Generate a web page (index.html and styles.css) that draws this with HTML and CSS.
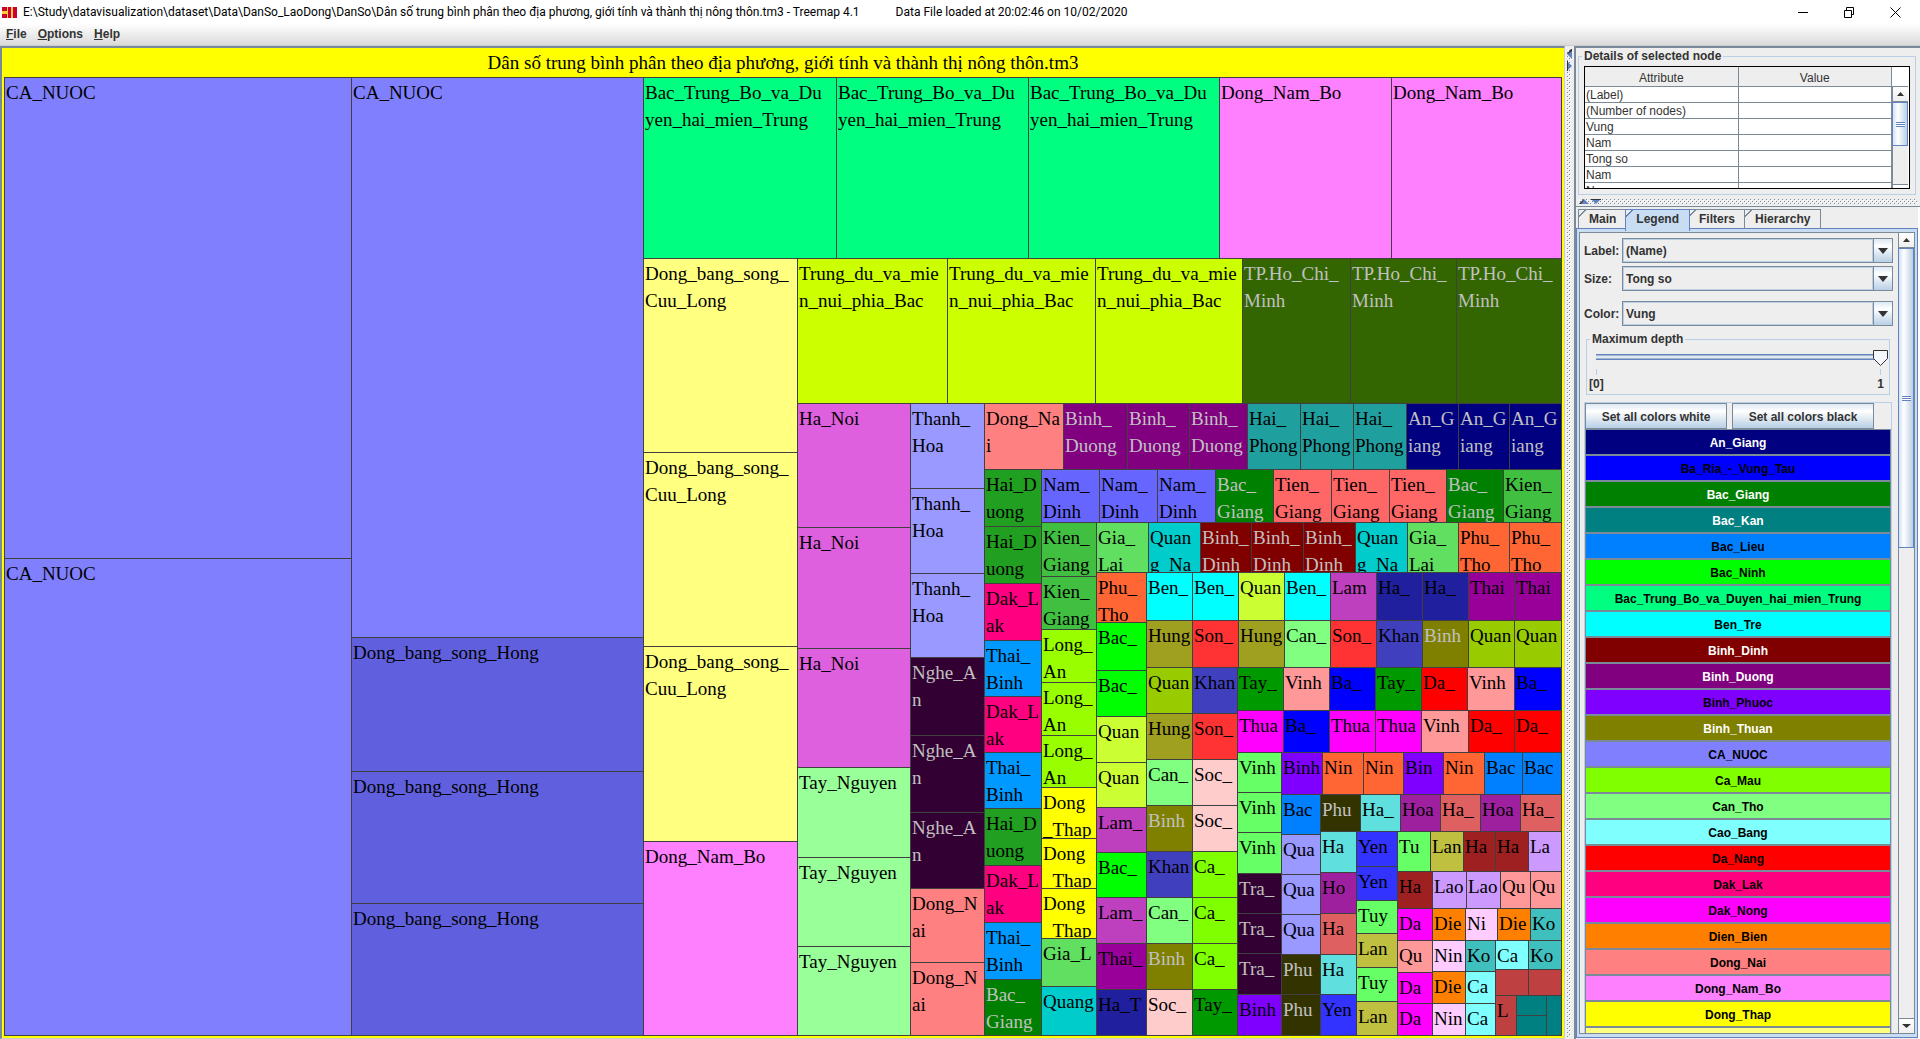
FILE: index.html
```html
<!DOCTYPE html>
<html lang="vi">
<head>
<meta charset="utf-8">
<title>Treemap 4.1</title>
<link rel="stylesheet" href="styles.css">
</head>
<body>
<header class="titlebar">
  <svg class="app-icon" width="15" height="11" viewBox="0 0 15 11" aria-hidden="true"><path fill="#ffcc33" d="M0 0h15v11H0z"/><path fill="#cc0033" d="M0 0h5v4H0zM0 7h5v4H0zM6 0h3v11H6zM11 0h4v11h-4z"/></svg>
  <span>E:\Study\datavisualization\dataset\Data\DanSo_LaoDong\DanSo\Dân số trung bình phân theo địa phương, giới tính và thành thị nông thôn.tm3 - Treemap 4.1</span>
  <span class="loaded">Data File loaded at 20:02:46 on 10/02/2020</span>
  <div class="window-buttons">
    <button aria-label="Minimize"><svg width="11" height="11"><path stroke="#000" d="M0 5.5h10"/></svg></button>
    <button aria-label="Restore"><svg width="11" height="11"><path fill="none" stroke="#000" d="M.5 3.5h7v7h-7zM2.500 3.500v-3h7v7h-2"/></svg></button>
    <button aria-label="Close"><svg width="11" height="11"><path stroke="#000" d="M.5.5l10 10M10.500.5l-10 10"/></svg></button>
  </div>
</header>
<nav class="menubar">
  <button><u>F</u>ile</button>
  <button><u>O</u>ptions</button>
  <button><u>H</u>elp</button>
</nav>
<main class="workspace">
  <section class="map-panel">
    <h1 class="map-title">Dân số trung bình phân theo địa phương, giới tính và thành thị nông thôn.tm3</h1>
    <div class="treemap" id="treemap"></div>
  </section>
  <div class="divider-v dots">
    <svg width="5" height="10"><path fill="#6382bf" d="M5 0v10L0 5z"/><path fill="#333" d="M4 0h1v2L1 5 0 5z"/></svg>
    <svg width="5" height="10"><path fill="#6382bf" d="M0 0l5 5-5 5z"/><path fill="#333" d="M0 0h1v10H0z"/></svg>
  </div>
  <aside class="sidebar">
    <fieldset class="group details">
      <legend>Details of selected node</legend>
      <div class="details-box">
        <table>
          <thead><tr><th>Attribute</th><th>Value</th></tr></thead>
          <tbody>
            <tr><td>(Label)</td><td></td></tr>
            <tr><td>(Number of nodes)</td><td></td></tr>
            <tr><td>Vung</td><td></td></tr>
            <tr><td>Nam</td><td></td></tr>
            <tr><td>Tong so</td><td></td></tr>
            <tr><td>Nam</td><td></td></tr>
            <tr><td>Nu</td><td></td></tr>
          </tbody>
        </table>
        <div class="scrollbar details-scroll">
          <button aria-label="Scroll up"><svg width="7" height="4"><path fill="#333" d="M0 4h7L3.500 0z"/></svg></button>
          <div class="track"><div class="thumb details-thumb"></div></div>
          <button aria-label="Scroll down"><svg width="9" height="4"><path fill="#333" d="M0 0h9L4.500 4z"/></svg></button>
        </div>
      </div>
    </fieldset>
    <div class="divider-h dots">
      <svg width="10" height="5"><path fill="#6382bf" d="M0 5h10L5 0z"/><path fill="#333" d="M0 5L5 0v1L2 5z"/></svg>
      <svg width="10" height="5"><path fill="#6382bf" d="M0 0h10L5 5z"/><path fill="#333" d="M0 0h10v1H0z"/></svg>
    </div>
    <div class="tabs-pane">
      <div class="tabs" role="tablist">
        <button role="tab" class="tab">Main</button>
        <button role="tab" class="tab selected" aria-selected="true">Legend</button>
        <button role="tab" class="tab">Filters</button>
        <button role="tab" class="tab">Hierarchy</button>
      </div>
      <div class="tab-panel" role="tabpanel">
        <div class="tab-view">
          <div class="legend-form">
            <div class="field"><label for="f-label">Label:</label><div class="combo"><select id="f-label"><option>(Name)</option></select><span class="arrow"><svg width="10" height="6"><path fill="#333" d="M0 0h10L5 6z"/></svg></span></div></div>
            <div class="field"><label for="f-size">Size:</label><div class="combo"><select id="f-size"><option>Tong so</option></select><span class="arrow"><svg width="10" height="6"><path fill="#333" d="M0 0h10L5 6z"/></svg></span></div></div>
            <div class="field field-color"><label for="f-color">Color:</label><div class="combo"><select id="f-color"><option>Vung</option></select><span class="arrow"><svg width="10" height="6"><path fill="#333" d="M0 0h10L5 6z"/></svg></span></div></div>
            <fieldset class="group depth">
              <legend>Maximum depth</legend>
              <input type="range" min="0" max="1" value="1" aria-label="Maximum depth">
              <div class="ticks"><span></span><span></span></div>
              <div class="tick-labels"><span>[0]</span><span>1</span></div>
            </fieldset>
            <div class="colors">
              <div class="color-actions">
                <button class="metal">Set all colors white</button>
                <button class="metal">Set all colors black</button>
              </div>
              <div class="color-list" id="colors"></div>
            </div>
          </div>
          <div class="scrollbar">
            <button aria-label="Scroll up"><svg width="7" height="4"><path fill="#333" d="M0 4h7L3.500 0z"/></svg></button>
            <div class="track"><div class="thumb form-thumb"></div></div>
            <button aria-label="Scroll down"><svg width="9" height="4"><path fill="#333" d="M0 0h9L4.500 4z"/></svg></button>
          </div>
        </div>
      </div>
    </div>
  </aside>
</main>
<script src="treemap.js"></script>
</body>
</html>
```

FILE: styles.css
```css
* { box-sizing: border-box; }
body {
  margin: 0;
  height: 100vh;
  display: flex;
  flex-direction: column;
  overflow: hidden;
  background: #eee;
  color: #333;
  font: bold 12px/14px "Liberation Sans", Arial, sans-serif;
}
button, select, input { font: inherit; color: inherit; margin: 0; }
button { border: 0; padding: 0; background: none; display: flex; align-items: center; justify-content: center; }
svg { display: block; flex: none; }

.titlebar {
  display: flex;
  align-items: center;
  flex: none;
  height: 24px;
  padding-left: 2px;
  background: #fff;
  color: #000;
  font: 12px/16px Roboto, "Noto Sans", sans-serif;
  white-space: pre;
}
.app-icon { margin-right: 6px; }
.loaded { margin-left: 36px; }
.window-buttons { margin-left: auto; padding-right: 2px; display: flex; }
.window-buttons button { width: 46px; height: 20px; }

.menubar {
  display: flex;
  gap: 11px;
  flex: none;
  height: 22px;
  padding: 3px 6px 0;
  background: linear-gradient(#fff, #dadada);
  border-bottom: 1px solid #ccc;
}
.menubar button { display: block; height: 14px; }

.workspace { flex: 1; min-height: 0; display: flex; }
.map-panel {
  flex: 1;
  min-width: 0;
  display: flex;
  flex-direction: column;
  background: #ff0;
  border: solid #7a8a99;
  border-width: 2px 1px 1px 2px;
  border-right-color: #ccc;
  border-bottom-color: #ccc;
  padding: 0 2px 2px;
}
.map-title {
  margin: 0;
  height: 29px;
  flex: none;
  text-align: center;
  font: 19px/29px "Liberation Serif", "Times New Roman", serif;
  color: #000;
}
.treemap {
  flex: 1;
  min-height: 0;
  display: flex;
  border: solid #404040;
  border-width: 0 1px 1px 0;
  font: 19px/27px "Liberation Serif", "Times New Roman", serif;
  color: #000;
}
.row, .col, .cell { flex: 1 1 0; min-width: 0; min-height: 0; }
.row { display: flex; }
.col { display: flex; flex-direction: column; }
.cell {
  overflow: hidden;
  white-space: pre;
  box-shadow: inset 1px 1px #404040;
}
.cell span { display: block; margin: 2px 0 0 2px; }
.cell.dark { color: #c0c0c0; }

.dots {
  background: #eee url("data:image/svg+xml,%3Csvg xmlns='http://www.w3.org/2000/svg' width='4' height='4'%3E%3Cpath fill='%237a8a99' d='M0 0h1v1H0zM2 2h1v1H2z'/%3E%3Cpath fill='%23fff' d='M1 1h1v1H1zM3 3h1v1H3z'/%3E%3C/svg%3E");
  background-clip: content-box;
}
.divider-v {
  width: 9px;
  flex: none;
  padding: 3px 3px 2px 2px;
  background-color: #eee;
  display: flex;
  flex-direction: column;
  align-items: center;
  gap: 2px;
}
.divider-h { height: 9px; padding: 2px 2px 2px 3px; display: flex; gap: 2px; flex: none; }

.sidebar {
  width: 346px;
  flex: none;
  display: flex;
  flex-direction: column;
  border: solid #7a8a99;
  border-width: 2px 0 0 2px;
  background: #eee;
}
.group { border: 1px solid #b8cfe5; min-width: 0; }
.group legend { padding: 0 2px; }
.details { margin: 1px 4px 2px 2px; padding: 3px 5px 5px; flex: none; }
.details legend { margin-left: -2px; }
.details-box {
  display: grid;
  grid-template-columns: 1fr 17px;
  height: 123px;
  overflow: hidden;
  border: 1px solid #000;
  background: #fff;
}
.details table { border-collapse: separate; border-spacing: 0; table-layout: fixed; width: 100%; font-weight: normal; align-self: start; }
.details th, .details td { border: solid #7a8a99; border-width: 0 1px 1px 0; padding: 1px 1px 0; height: 16px; line-height: 14px; }
.details th { height: 20px; padding-top: 2px; font-weight: normal; background: #eee; }
.details-scroll { border-top: 1px solid #7a8a99; margin-top: 19px; }

.scrollbar { width: 16px; display: flex; flex-direction: column; min-height: 0; background: #eee; border-left: 1px solid #7a8a99; }
.scrollbar button { height: 15px; flex: none; border: 1px solid #7a8a99; border-width: 0 0 1px; background: linear-gradient(#fff, #eee); }
.scrollbar button:last-child { border-width: 1px 0 0; }
.track { flex: 1; min-height: 0; }
.thumb {
  margin-left: -1px;
  border: 1px solid #6382bf;
  background: linear-gradient(90deg, #d3e2f1, #fff 35%, #b8cfe5);
  display: flex;
  align-items: center;
  justify-content: center;
}
.thumb::before { content: ""; width: 9px; height: 5px; background: repeating-linear-gradient(#6382bf 0 1px, #fff 1px 2px); }
.details-thumb { height: 44px; }
.form-thumb { height: 39%; }

.tabs-pane { flex: 1; min-height: 0; display: flex; flex-direction: column; padding: 2px 2px 1px 0; border-top: 1px solid #7a8a99; background: #eee; box-shadow: inset -2px 0 #fff; }
.tabs { display: flex; padding-left: 2px; flex: none; height: 19px; }
.tab { height: 19px; padding: 0 10px; border: solid #7a8a99; border-width: 1px 1px 0; margin-left: -2px; position: relative; background: linear-gradient(135deg, #eee 4px, #7a8a99 4px 5px, #eee 5px); }
.tab:first-child { margin-left: 0; }
.tab.selected { z-index: 1; height: 22px; padding-bottom: 3px; border-color: #6382bf; background: linear-gradient(135deg, #eee 4px, #6382bf 4px 5px, #c8ddf2 5px); }
.tab-panel { flex: 1; min-height: 0; border: 1px solid #6382bf; padding: 3px 2px; background: #c8ddf2; display: flex; }
.tab-view { flex: 1; min-width: 0; border: 1px solid #7a8a99; background: #eee; display: flex; overflow: hidden; }
.legend-form { flex: 1; min-width: 0; padding: 5px 5px 0 4px; display: flex; flex-direction: column; gap: 3px; }
.field { display: grid; grid-template-columns: 38px 1fr; align-items: center; flex: none; }
.field-color { margin-top: 7px; }
.combo { height: 25px; display: flex; border: 1px solid #7a8a99; }
.combo select { flex: 1; min-width: 0; appearance: none; border: 1px solid #b8cfe5; border-radius: 0; background: #eee; padding: 0 2px; }
.arrow { width: 19px; display: flex; align-items: center; justify-content: center; border-left: 1px solid #7a8a99; background: linear-gradient(#dde8f3, #fff 30%, #b8cfe5); pointer-events: none; }
.depth { margin: 3px 3px 4px 2px; padding: 3px 1px 3px 2px; flex: none; }
.depth legend { margin-left: 1px; }
.depth input {
  display: block;
  width: 100%;
  height: 17px;
  appearance: none;
  background: linear-gradient(#6382bf 1px, #a3b8cc 1px 2px, #dde8f3 2px 4px, #a3b8cc 4px 5px, #6382bf 5px) no-repeat 7px 5px / calc(100% - 14px) 6px;
}
.depth input::-webkit-slider-thumb {
  appearance: none;
  width: 15px;
  height: 16px;
  background: url("data:image/svg+xml,%3Csvg xmlns='http://www.w3.org/2000/svg' width='15' height='16'%3E%3Cpath fill='%23f4f8fc' stroke='%23333' d='M.5.5h14v8l-7 7-7-7z'/%3E%3C/svg%3E");
}
.ticks { display: flex; justify-content: space-between; margin: 3px 7px 2px; height: 6px; }
.ticks span { width: 1px; background: #b8cfe5; }
.tick-labels { display: flex; justify-content: space-between; padding-right: 4px; }

.colors { flex: none; border: 1px solid #b8cfe5; margin-right: 1px; }
.color-actions { display: flex; gap: 5px; }
.metal { width: 142px; height: 26px; padding-top: 2px; border: 1px solid #7a8a99; background: linear-gradient(#dde8f3, #fff 30%, #b8cfe5); }
.swatch { width: 100%; height: 26px; padding-top: 2px; border: 1px solid #7a8a99; color: #000; }
.swatch.light { color: #fff; }
```

FILE: treemap.js
```js
// Region key -> fill colour. Keys in `darkFills` carry light labels.
const fills = {
  CaNuoc: '#8080ff', BTB: '#00ff80', DNB: '#ff80ff', CuuLong: '#ffff80', TDMN: '#ccff00', HCM: '#336600',
  SongHong: '#6060df', HaNoi: '#df60df', TayNguyen: '#99ff99', ThanhHoa: '#9999ff', NgheAn: '#330033',
  DongNai: '#ff8080', BinhDuong: '#800080', HaiPhong: '#209f9f', AnGiang: '#000080', HaiDuong: '#209f20',
  DakLak: '#ff0080', ThaiBinh: '#0099ff', BacGiang: '#008000', NamDinh: '#6666ff', KienGiang: '#40bf40',
  TienGiang: '#ff6666', LongAn: '#99ff00', DongThap: '#ffff00', GiaLai: '#60df60', QuangNam: '#00cccc',
  BinhDinh: '#800000', PhuTho: '#ff6633', BacNinh: '#00ff00', QuangNgai: '#ccff33', LamDong: '#bf40bf',
  HaTinh: '#20209f', ThaiNguyen: '#990099', BenTre: '#00ffff', HungYen: '#9f9f20', SonLa: '#ff3333',
  CanTho: '#80ff80', KhanhHoa: '#4040bf', BinhThuan: '#808000', QuangNinh: '#99cc00', TayNinh: '#009900',
  VinhPhuc: '#ff9999', BaRia: '#0000ff', DaNang: '#ff0000', Hue: '#ff00ff', VinhLong: '#66ff66',
  BinhPhuoc: '#8000ff', NinhBinh: '#ff6633', BacLieu: '#0080ff', PhuYen: '#333300', HauGiang: '#60dfdf',
  HoaBinh: '#9f209f', HaGiang: '#df6060', QuangBinh: '#9999ff', TraVinh: '#330033', YenBai: '#3333ff',
  Tuyen: '#66ff66', LangSon: '#bfbf40', HaNam: '#9f2020', LaoCai: '#cc99ff', QuangTri: '#ff9999',
  DakNong: '#ff00ff', DienBien: '#ff8000', NinhThuan: '#ffccff', KonTum: '#40bfbf', CaoBang: '#80ffff',
  LaiChau: '#bf4040', BacKan: '#008080', SocTrang: '#ffcccc', CaMau: '#80ff00'
};
const darkFills = ['HCM', 'NgheAn', 'BinhDuong', 'AnGiang', 'BacGiang', 'BinhDinh', 'BinhThuan', 'TraVinh', 'PhuYen'];

function box(cls, weight, kids) {
  const el = document.createElement('div');
  el.className = cls;
  el.style.flexGrow = weight;
  kids.forEach(k => el.appendChild(k));
  return el;
}
const row = (weight, ...kids) => box('row', weight, kids);
const col = (weight, ...kids) => box('col', weight, kids);
function leaf(weight, key, text) {
  const el = box(darkFills.includes(key) ? 'cell dark' : 'cell', weight, []);
  el.style.backgroundColor = fills[key];
  if (text) {
    const label = document.createElement('span');
    label.textContent = text;
    el.appendChild(label);
  }
  return el;
}

// Each weight is the share of the parent's width (in a row) or height (in a column).
const m7 = row(127,
  col(35, leaf(32, 'DakNong', 'Da'), leaf(32, 'QuangTri', 'Qu'), leaf(31, 'DakNong', 'Da'), leaf(32, 'DakNong', 'Da')),
  col(33, leaf(32, 'DienBien', 'Die'), leaf(31, 'NinhThuan', 'Nin'), leaf(32, 'DienBien', 'Die'), leaf(32, 'NinhThuan', 'Nin')),
  col(96,
    row(32, leaf(32, 'NinhThuan', 'Ni'), leaf(33, 'DienBien', 'Die'), leaf(31, 'KonTum', 'Ko')),
    row(95,
      col(30, leaf(31, 'KonTum', 'Ko'), leaf(32, 'CaoBang', 'Ca'), leaf(32, 'CaoBang', 'Ca')),
      col(66,
        row(29, leaf(33, 'CaoBang', 'Ca'), leaf(33, 'KonTum', 'Ko')),
        row(26, leaf(33, 'LaiChau'), leaf(33, 'LaiChau')),
        row(40,
          leaf(21, 'LaiChau', 'L'),
          col(30, leaf(20, 'BacKan'), leaf(20, 'BacKan')),
          leaf(15, 'BacKan'))))));

const m6 = row(204,
  col(36, leaf(41, 'HauGiang', 'Ha'), leaf(41, 'HoaBinh', 'Ho'), leaf(41, 'HaGiang', 'Ha'), leaf(40, 'HauGiang', 'Ha'), leaf(41, 'YenBai', 'Yen')),
  col(41, leaf(35, 'YenBai', 'Yen'), leaf(34, 'YenBai', 'Yen'), leaf(33, 'Tuyen', 'Tuy'), leaf(34, 'LangSon', 'Lan'), leaf(34, 'Tuyen', 'Tuy'), leaf(34, 'LangSon', 'Lan')),
  col(164,
    row(40, leaf(33, 'Tuyen', 'Tu'), leaf(33, 'LangSon', 'Lan'), leaf(32, 'HaNam', 'Ha'), leaf(33, 'HaNam', 'Ha'), leaf(33, 'LaoCai', 'La')),
    row(37, leaf(35, 'HaNam', 'Ha'), leaf(34, 'LaoCai', 'Lao'), leaf(34, 'LaoCai', 'Lao'), leaf(30, 'QuangTri', 'Qu'), leaf(31, 'QuangTri', 'Qu')),
    m7));

const m5 = row(283,
  col(44, leaf(40, 'VinhLong', 'Vinh'), leaf(40, 'VinhLong', 'Vinh'), leaf(41, 'VinhLong', 'Vinh'), leaf(40, 'TraVinh', 'Tra_'), leaf(40, 'TraVinh', 'Tra_'), leaf(41, 'TraVinh', 'Tra_'), leaf(41, 'BinhPhuoc', 'Binh')),
  col(280,
    row(42, leaf(41, 'BinhPhuoc', 'Binh'), leaf(41, 'NinhBinh', 'Nin'), leaf(40, 'NinhBinh', 'Nin'), leaf(40, 'BinhPhuoc', 'Bin'), leaf(41, 'NinhBinh', 'Nin'), leaf(38, 'BacLieu', 'Bac'), leaf(39, 'BacLieu', 'Bac')),
    row(241,
      col(39, leaf(40, 'BacLieu', 'Bac'), leaf(40, 'QuangBinh', 'Qua'), leaf(40, 'QuangBinh', 'Qua'), leaf(40, 'QuangBinh', 'Qua'), leaf(40, 'PhuYen', 'Phu'), leaf(41, 'PhuYen', 'Phu')),
      col(241,
        row(37, leaf(40, 'PhuYen', 'Phu'), leaf(40, 'HauGiang', 'Ha_'), leaf(40, 'HoaBinh', 'Hoa'), leaf(40, 'HaGiang', 'Ha_'), leaf(40, 'HoaBinh', 'Hoa'), leaf(41, 'HaGiang', 'Ha_')),
        m6))));

const m4 = row(368,
  col(46, leaf(46, 'QuangNinh', 'Quan'), leaf(46, 'HungYen', 'Hung'), leaf(46, 'CanTho', 'Can_'), leaf(46, 'BinhThuan', 'Binh'), leaf(46, 'KhanhHoa', 'Khan'), leaf(46, 'CanTho', 'Can_'), leaf(46, 'BinhThuan', 'Binh'), leaf(46, 'SocTrang', 'Soc_')),
  col(45, leaf(46, 'KhanhHoa', 'Khan'), leaf(46, 'SonLa', 'Son_'), leaf(46, 'SocTrang', 'Soc_'), leaf(46, 'SocTrang', 'Soc_'), leaf(46, 'CaMau', 'Ca_'), leaf(46, 'CaMau', 'Ca_'), leaf(46, 'CaMau', 'Ca_'), leaf(46, 'TayNinh', 'Tay_')),
  col(324,
    row(43, leaf(46, 'TayNinh', 'Tay_'), leaf(46, 'VinhPhuc', 'Vinh'), leaf(46, 'BaRia', 'Ba_'), leaf(46, 'TayNinh', 'Tay_'), leaf(46, 'DaNang', 'Da_'), leaf(47, 'VinhPhuc', 'Vinh'), leaf(47, 'BaRia', 'Ba_')),
    row(42, leaf(46, 'Hue', 'Thua'), leaf(46, 'BaRia', 'Ba_'), leaf(46, 'Hue', 'Thua'), leaf(46, 'Hue', 'Thua'), leaf(47, 'VinhPhuc', 'Vinh'), leaf(46, 'DaNang', 'Da_'), leaf(47, 'DaNang', 'Da_')),
    m5));

const m3 = row(463,
  col(50, leaf(50, 'PhuTho', 'Phu_\nTho'), leaf(48, 'BacNinh', 'Bac_'), leaf(46, 'BacNinh', 'Bac_'), leaf(46, 'QuangNgai', 'Quan'), leaf(45, 'QuangNgai', 'Quan'), leaf(45, 'LamDong', 'Lam_'), leaf(45, 'BacNinh', 'Bac_'), leaf(46, 'LamDong', 'Lam_'), leaf(46, 'ThaiNguyen', 'Thai_'), leaf(46, 'HaTinh', 'Ha_T')),
  col(415,
    row(48, leaf(46, 'BenTre', 'Ben_'), leaf(46, 'BenTre', 'Ben_'), leaf(46, 'QuangNgai', 'Quan'), leaf(46, 'BenTre', 'Ben_'), leaf(46, 'LamDong', 'Lam'), leaf(46, 'HaTinh', 'Ha_'), leaf(46, 'HaTinh', 'Ha_'), leaf(46, 'ThaiNguyen', 'Thai'), leaf(47, 'ThaiNguyen', 'Thai')),
    row(47, leaf(46, 'HungYen', 'Hung'), leaf(46, 'SonLa', 'Son_'), leaf(46, 'HungYen', 'Hung'), leaf(46, 'CanTho', 'Can_'), leaf(46, 'SonLa', 'Son_'), leaf(46, 'KhanhHoa', 'Khan'), leaf(46, 'BinhThuan', 'Binh'), leaf(46, 'QuangNinh', 'Quan'), leaf(47, 'QuangNinh', 'Quan')),
    m4));

const m2 = row(513,
  col(55, leaf(54, 'KienGiang', 'Kien_\nGiang'), leaf(53, 'KienGiang', 'Kien_\nGiang'), leaf(53, 'LongAn', 'Long_\nAn'), leaf(53, 'LongAn', 'Long_\nAn'), leaf(52, 'LongAn', 'Long_\nAn'), leaf(51, 'DongThap', 'Dong\n_Thap'), leaf(50, 'DongThap', 'Dong\n_Thap'), leaf(50, 'DongThap', 'Dong\n_Thap'), leaf(48, 'GiaLai', 'Gia_L'), leaf(49, 'QuangNam', 'Quang')),
  col(465,
    row(50, leaf(52, 'GiaLai', 'Gia_\nLai'), leaf(52, 'QuangNam', 'Quan\ng_Na'), leaf(51, 'BinhDinh', 'Binh_\nDinh'), leaf(52, 'BinhDinh', 'Binh_\nDinh'), leaf(52, 'BinhDinh', 'Binh_\nDinh'), leaf(52, 'QuangNam', 'Quan\ng_Na'), leaf(51, 'GiaLai', 'Gia_\nLai'), leaf(51, 'PhuTho', 'Phu_\nTho'), leaf(52, 'PhuTho', 'Phu_\nTho')),
    m3));

const m1 = row(566,
  col(57, leaf(57, 'HaiDuong', 'Hai_D\nuong'), leaf(57, 'HaiDuong', 'Hai_D\nuong'), leaf(57, 'DakLak', 'Dak_L\nak'), leaf(56, 'ThaiBinh', 'Thai_\nBinh'), leaf(56, 'DakLak', 'Dak_L\nak'), leaf(56, 'ThaiBinh', 'Thai_\nBinh'), leaf(57, 'HaiDuong', 'Hai_D\nuong'), leaf(57, 'DakLak', 'Dak_L\nak'), leaf(57, 'ThaiBinh', 'Thai_\nBinh'), leaf(56, 'BacGiang', 'Bac_\nGiang')),
  col(520,
    row(53, leaf(58, 'NamDinh', 'Nam_\nDinh'), leaf(58, 'NamDinh', 'Nam_\nDinh'), leaf(58, 'NamDinh', 'Nam_\nDinh'), leaf(58, 'BacGiang', 'Bac_\nGiang'), leaf(58, 'TienGiang', 'Tien_\nGiang'), leaf(58, 'TienGiang', 'Tien_\nGiang'), leaf(57, 'TienGiang', 'Tien_\nGiang'), leaf(57, 'BacGiang', 'Bac_\nGiang'), leaf(58, 'KienGiang', 'Kien_\nGiang')),
    m2));

const lower = row(632,
  col(113, leaf(124, 'HaNoi', 'Ha_Noi'), leaf(121, 'HaNoi', 'Ha_Noi'), leaf(119, 'HaNoi', 'Ha_Noi'), leaf(90, 'TayNguyen', 'Tay_Nguyen'), leaf(89, 'TayNguyen', 'Tay_Nguyen'), leaf(89, 'TayNguyen', 'Tay_Nguyen')),
  col(74, leaf(85, 'ThanhHoa', 'Thanh_\nHoa'), leaf(85, 'ThanhHoa', 'Thanh_\nHoa'), leaf(84, 'ThanhHoa', 'Thanh_\nHoa'), leaf(78, 'NgheAn', 'Nghe_A\nn'), leaf(77, 'NgheAn', 'Nghe_A\nn'), leaf(76, 'NgheAn', 'Nghe_A\nn'), leaf(74, 'DongNai', 'Dong_N\nai'), leaf(73, 'DongNai', 'Dong_N\nai')),
  col(577,
    row(66, leaf(79, 'DongNai', 'Dong_Na\ni'), leaf(64, 'BinhDuong', 'Binh_\nDuong'), leaf(62, 'BinhDuong', 'Binh_\nDuong'), leaf(58, 'BinhDuong', 'Binh_\nDuong'), leaf(53, 'HaiPhong', 'Hai_\nPhong'), leaf(53, 'HaiPhong', 'Hai_\nPhong'), leaf(53, 'HaiPhong', 'Hai_\nPhong'), leaf(52, 'AnGiang', 'An_G\niang'), leaf(51, 'AnGiang', 'An_G\niang'), leaf(52, 'AnGiang', 'An_G\niang')),
    m1));

const map = row(1,
  col(347, leaf(481, 'CaNuoc', 'CA_NUOC'), leaf(477, 'CaNuoc', 'CA_NUOC')),
  col(292, leaf(560, 'CaNuoc', 'CA_NUOC'), leaf(134, 'SongHong', 'Dong_bang_song_Hong'), leaf(132, 'SongHong', 'Dong_bang_song_Hong'), leaf(132, 'SongHong', 'Dong_bang_song_Hong')),
  col(918,
    row(181, leaf(193, 'BTB', 'Bac_Trung_Bo_va_Du\nyen_hai_mien_Trung'), leaf(192, 'BTB', 'Bac_Trung_Bo_va_Du\nyen_hai_mien_Trung'), leaf(191, 'BTB', 'Bac_Trung_Bo_va_Du\nyen_hai_mien_Trung'), leaf(172, 'DNB', 'Dong_Nam_Bo'), leaf(170, 'DNB', 'Dong_Nam_Bo')),
    row(777,
      col(154, leaf(194, 'CuuLong', 'Dong_bang_song_\nCuu_Long'), leaf(194, 'CuuLong', 'Dong_bang_song_\nCuu_Long'), leaf(195, 'CuuLong', 'Dong_bang_song_\nCuu_Long'), leaf(194, 'DNB', 'Dong_Nam_Bo')),
      col(764,
        row(145, leaf(150, 'TDMN', 'Trung_du_va_mie\nn_nui_phia_Bac'), leaf(148, 'TDMN', 'Trung_du_va_mie\nn_nui_phia_Bac'), leaf(147, 'TDMN', 'Trung_du_va_mie\nn_nui_phia_Bac'), leaf(108, 'HCM', 'TP.Ho_Chi_\nMinh'), leaf(106, 'HCM', 'TP.Ho_Chi_\nMinh'), leaf(105, 'HCM', 'TP.Ho_Chi_\nMinh')),
        lower))));
document.getElementById('treemap').appendChild(map);

// Legend: name, colour, and whether the label is light.
const legend = [
  ['An_Giang', '#000080', 1], ['Ba_Ria_-_Vung_Tau', '#0000ff'], ['Bac_Giang', '#008000', 1], ['Bac_Kan', '#008080', 1],
  ['Bac_Lieu', '#0080ff'], ['Bac_Ninh', '#00ff00'], ['Bac_Trung_Bo_va_Duyen_hai_mien_Trung', '#00ff80'],
  ['Ben_Tre', '#00ffff'], ['Binh_Dinh', '#800000', 1], ['Binh_Duong', '#800080', 1], ['Binh_Phuoc', '#8000ff'],
  ['Binh_Thuan', '#808000', 1], ['CA_NUOC', '#8080ff'], ['Ca_Mau', '#80ff00'], ['Can_Tho', '#80ff80'],
  ['Cao_Bang', '#80ffff'], ['Da_Nang', '#ff0000'], ['Dak_Lak', '#ff0080'], ['Dak_Nong', '#ff00ff'],
  ['Dien_Bien', '#ff8000'], ['Dong_Nai', '#ff8080'], ['Dong_Nam_Bo', '#ff80ff'], ['Dong_Thap', '#ffff00'],
  ['Dong_bang_song_Cuu_Long', '#ffff80']
];
legend.forEach(([name, fill, light]) => {
  const item = document.createElement('button');
  item.className = light ? 'swatch light' : 'swatch';
  item.style.backgroundColor = fill;
  item.textContent = name;
  document.getElementById('colors').appendChild(item);
});
```
